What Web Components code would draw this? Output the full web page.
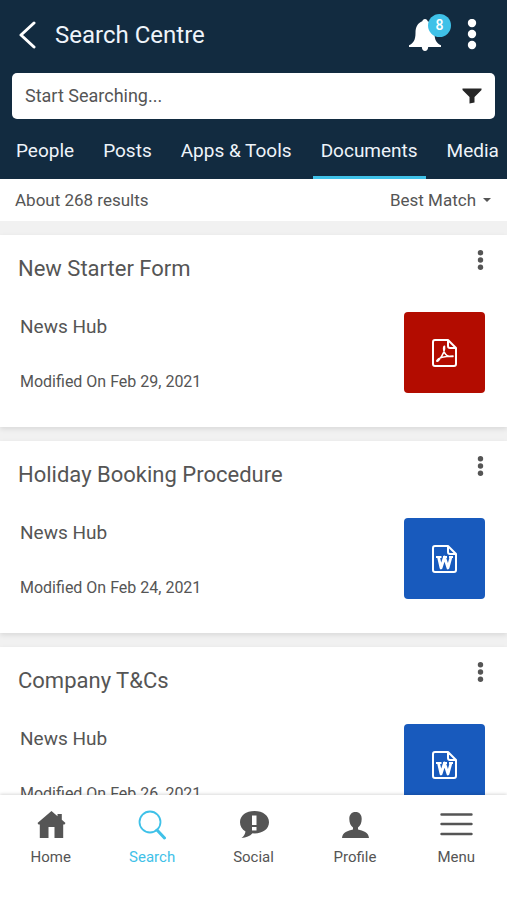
<!DOCTYPE html>
<html lang="en">
<head>
<meta charset="utf-8">
<meta name="viewport" content="width=device-width, initial-scale=1">
<title>Search Centre</title>
<style>
  :root {
    --navy: #122b40;
    --accent: #3fc1e8;
    --text: #555;
    --page: #f1f1f1;
  }
  body {
    margin: 0;
    background: var(--page);
    color: var(--text);
    font-family: Roboto, "Liberation Sans", sans-serif;
  }
</style>
</head>
<body>
<search-app>
  <app-header slot="header" heading="Search Centre" notifications="8">
    <search-box placeholder="Start Searching..."></search-box>
    <tab-bar slot="tabs">
      <tab-item>People</tab-item>
      <tab-item>Posts</tab-item>
      <tab-item>Apps &amp; Tools</tab-item>
      <tab-item selected>Documents</tab-item>
      <tab-item>Media</tab-item>
    </tab-bar>
  </app-header>

  <results-bar>About 268 results</results-bar>
  <document-card type="pdf" source="News Hub" modified="Feb 29, 2021">New Starter Form</document-card>
  <document-card type="word" source="News Hub" modified="Feb 24, 2021">Holiday Booking Procedure</document-card>
  <document-card type="word" source="News Hub" modified="Feb 26, 2021">Company T&amp;Cs</document-card>

  <bottom-nav slot="footer">
    <nav-item icon="home">Home</nav-item>
    <nav-item icon="search" current>Search</nav-item>
    <nav-item icon="social">Social</nav-item>
    <nav-item icon="profile">Profile</nav-item>
    <nav-item icon="menu">Menu</nav-item>
  </bottom-nav>
</search-app>

<script>
// name: [width, height, shapes]
const ICONS = {
  back: [18, 28, `<path d="M16 2 3 14l13 12" fill="none" stroke="currentColor" stroke-width="3" stroke-linecap="round" stroke-linejoin="round"/>`],
  bell: [34, 34, `<path d="M17 1c1.500 0 2.500 1 2.700 2.300C24.200 5 26.500 9 26.500 15c0 7 2 10.200 6.500 12.200V29H20.200c-.2 2.600-1.400 4-3.200 4S14 31.600 13.800 29H1v-1.800C5.500 25.200 7.500 22 7.500 15c0-6 2.300-10 6.800-11.700C14.500 2 15.500 1 17 1z"/>`],
  more: [10, 32, `<circle cx="5" cy="4" r="4.200"/><circle cx="5" cy="15" r="4.200"/><circle cx="5" cy="26" r="4.200"/>`],
  dots: [10, 20, `<circle cx="5.500" cy="2.700" r="2.700"/><circle cx="5.500" cy="10" r="2.700"/><circle cx="5.500" cy="17.300" r="2.700"/>`],
  filter: [20, 16, `<path d="M.5.500h19v1.500L12.500 9v5.500l-5 1V9L.5 2z"/>`],
  home: [30, 30, `<path d="M15.500 1 1.500 13l1 1.500h1.300V28h8.700V17h6v11h8.700V14.500h1.300l1-1.500-3.700-3.200V4h-4.300v2.200z"/>`],
  search: [30, 30, `<circle cx="13" cy="12" r="10.500" fill="none" stroke="currentColor" stroke-width="1.800"/><path d="m20 20 7.500 8" stroke="currentColor" stroke-width="3" stroke-linecap="round"/>`],
  social: [30, 30, `<path fill-rule="evenodd" d="M15.500 1C7 1 1 5.600 1 12.200c0 4 2 7.200 5.500 9.200-.5 2.800-1.800 4.800-4 6.600 4.700-.2 8.500-1.800 11-4.700l2 .1c8.500 0 14.500-4.700 14.500-11.200S24 1 15.500 1zM13 5.500h4.500V15H13zm0 11.500h4.500v3.500H13z"/>`],
  profile: [30, 30, `<path d="M15.500 2c4 0 6.200 2.700 6.200 7 0 4-1.500 7-3.700 8.500v2c5 1.500 10.500 2.500 11 8.500H2c.5-6 6-7 11-8.500v-2C10.800 16 9.300 13 9.300 9c0-4.300 2.200-7 6.200-7z"/>`],
  menu: [34, 30, `<path d="M2.500 4.500h30M2.500 14h30M2.500 24h30" stroke="currentColor" stroke-width="2.400" stroke-linecap="round"/>`],
  pdf: [27, 28, `<g fill="none" stroke="currentColor" stroke-width="2" stroke-linejoin="round" stroke-linecap="round"><path d="M17 1H4a2 2 0 0 0-2 2v22a2 2 0 0 0 2 2h19a2 2 0 0 0 2-2V9zM17 1v6a2 2 0 0 0 2 2h6"/><path d="M13.300 7.200c-1.200.6-.8 4 .2 6.300 1.300 3 4.500 4.500 8.500 4M13.500 7.200c.8 4-1.500 9-6 14.300-.8.900-2 1.300-1.600.1C7 19 14 17.200 22 17" stroke-width="1.500"/></g>`],
  word: [27, 28, `<g fill="none" stroke="currentColor" stroke-width="2" stroke-linejoin="round"><path d="M17 1H4a2 2 0 0 0-2 2v22a2 2 0 0 0 2 2h19a2 2 0 0 0 2-2V9zM17 1v6a2 2 0 0 0 2 2h6"/><path d="m7.500 12 2.500 11 3.500-11 3.500 11 3-11" stroke-width="2.800"/><path d="M5 12h5.500m1.500 0h4m2 0h4" stroke-width="1.800"/></g>`],
};

function icon(name) {
  const [width, height, shapes] = ICONS[name];
  return `<svg width="${width}" height="${height}" viewBox="0 0 ${width} ${height}" fill="currentColor" aria-hidden="true">${shapes}</svg>`;
}

const RESET = `
  * { box-sizing: border-box; }
  svg { display: block; flex: none; }
  button, input, select {
    margin: 0;
    padding: 0;
    border: 0;
    background: none;
    color: inherit;
    font: inherit;
  }
  button { cursor: pointer; }
`;

/**
 * Base class: attaches an open shadow root and fills it once
 */
class BaseElement extends HTMLElement {
  constructor() {
    super();
    this.attachShadow({ mode: "open" });
  }

  connectedCallback() {
    this.shadowRoot.innerHTML = `<style>${RESET}${this.styles()}</style>${this.markup()}`;
  }
}

/**
 * Page frame: fixed header and footer with a scrolling list between them
 */
class SearchApp extends BaseElement {
  styles() {
    return `
      :host { display: flex; flex-direction: column; height: 100vh; }
      main { flex: 1; min-height: 0; overflow: hidden auto; scrollbar-width: none; }
      .list { display: flex; flex-direction: column; gap: 14px; }
    `;
  }

  markup() {
    return `
      <slot name="header"></slot>
      <main><div class="list"><slot></slot></div></main>
      <slot name="footer"></slot>
    `;
  }
}

class AppHeader extends BaseElement {
  styles() {
    return `
      :host { display: block; background: var(--navy); color: #eef4fa; }
      .top { display: flex; align-items: center; height: 73px; padding: 0 30px 3px 18px; }
      h1 { flex: 1; margin: 0 0 0 19px; font-size: 24px; font-weight: 400; line-height: 32px; }
      .top button { color: #fff; }
      .bell { position: relative; margin-right: 25px; }
      .badge {
        position: absolute;
        top: -4px;
        right: -9px;
        width: 23px;
        border-radius: 50%;
        background: var(--accent);
        font-size: 14px;
        font-weight: 500;
        line-height: 23px;
        text-align: center;
      }
      .search { padding: 0 12px; }
    `;
  }

  markup() {
    return `
      <header>
        <div class="top">
          <button aria-label="Back">${icon("back")}</button>
          <h1>${this.getAttribute("heading")}</h1>
          <button class="bell" aria-label="Notifications">
            ${icon("bell")}<span class="badge">${this.getAttribute("notifications")}</span>
          </button>
          <button aria-label="More options">${icon("more")}</button>
        </div>
        <div class="search"><slot></slot></div>
        <slot name="tabs"></slot>
      </header>
    `;
  }
}

class SearchBox extends BaseElement {
  styles() {
    return `
      :host { display: block; }
      form {
        display: flex;
        align-items: center;
        height: 46px;
        padding: 0 13px;
        border-radius: 5px;
        background: #fff;
        color: var(--text);
      }
      input { flex: 1; min-width: 0; outline: none; font-size: 18px; line-height: 24px; }
      input::placeholder { color: var(--text); opacity: 1; }
      button { color: #262626; }
    `;
  }

  markup() {
    return `
      <form role="search">
        <input type="search" aria-label="Search" placeholder="${this.getAttribute("placeholder")}">
        <button type="button" aria-label="Filter">${icon("filter")}</button>
      </form>
    `;
  }
}

class TabBar extends BaseElement {
  styles() {
    return `
      :host { display: block; }
      nav { display: flex; gap: 13px; padding: 0 8px; overflow: auto hidden; scrollbar-width: none; }
    `;
  }

  markup() {
    return `<nav aria-label="Result types"><slot></slot></nav>`;
  }
}

class TabItem extends BaseElement {
  styles() {
    return `
      :host { flex: none; }
      button {
        display: block;
        height: 60px;
        padding: 7px 8px 0;
        border-bottom: 3px solid transparent;
        font-size: 19px;
        line-height: 24px;
        white-space: nowrap;
      }
      :host([selected]) button { border-color: var(--accent); }
    `;
  }

  markup() {
    return `<button><slot></slot></button>`;
  }
}

class ResultsBar extends BaseElement {
  styles() {
    return `
      :host { display: block; background: #fff; }
      .bar {
        display: flex;
        justify-content: space-between;
        align-items: center;
        height: 42px;
        padding: 0 16px 1px 15px;
        font-size: 17px;
        line-height: 24px;
      }
      label { display: flex; align-items: center; gap: 7px; }
      select { appearance: none; field-sizing: content; outline: none; }
      .caret { border: 4px solid transparent; border-top-color: currentColor; border-bottom: 0; }
    `;
  }

  markup() {
    return `
      <div class="bar">
        <span><slot></slot></span>
        <label>
          <select aria-label="Sort by">
            <option>Best Match</option>
          </select>
          <span class="caret"></span>
        </label>
      </div>
    `;
  }
}

class DocumentCard extends BaseElement {
  styles() {
    return `
      :host { display: block; background: #fff; box-shadow: 0 2px 5px rgba(0, 0, 0, 0.1); }
      article {
        display: grid;
        gap: 24px;
        padding: 15px 22px 34px 18px;
      }
      .row { display: flex; justify-content: space-between; align-items: flex-start; }
      h2 { margin: 0; font-size: 22px; font-weight: 400; line-height: 38px; }
      .meta {
        display: flex;
        flex-direction: column;
        justify-content: space-between;
        align-self: stretch;
        padding-left: 2px;
      }
      p { margin: 0; font-size: 19px; line-height: 30px; }
      .modified { font-size: 16px; line-height: 22px; }
      .tile {
        display: grid;
        place-items: center;
        width: 81px;
        height: 81px;
        border-radius: 4px;
        background: #b30c00;
        color: #fff;
      }
      :host([type="word"]) .tile { background: #185abd; }
    `;
  }

  markup() {
    return `
      <article>
        <div class="row">
          <h2><slot></slot></h2>
          <button aria-label="Document options">${icon("dots")}</button>
        </div>
        <div class="row">
          <div class="meta">
            <p>${this.getAttribute("source")}</p>
            <p class="modified">Modified On ${this.getAttribute("modified")}</p>
          </div>
          <div class="tile">${icon(this.getAttribute("type"))}</div>
        </div>
      </article>
    `;
  }
}

class BottomNav extends BaseElement {
  styles() {
    return `
      :host {
        display: block;
        position: relative;
        background: #fff;
        box-shadow: 0 -1px 3px rgba(0, 0, 0, 0.15);
      }
      nav { display: flex; padding: 15px 0 33px; }
    `;
  }

  markup() {
    return `<nav aria-label="Main"><slot></slot></nav>`;
  }
}

class NavItem extends BaseElement {
  styles() {
    return `
      :host { flex: 1 1 0; }
      :host([current]) { color: var(--accent); }
      a {
        display: flex;
        flex-direction: column;
        align-items: center;
        gap: 7px;
        color: inherit;
        font-size: 15px;
        line-height: 20px;
        text-decoration: none;
      }
    `;
  }

  markup() {
    return `<a href="#${this.getAttribute("icon")}">${icon(this.getAttribute("icon"))}<span><slot></slot></span></a>`;
  }
}

customElements.define("search-app", SearchApp);
customElements.define("app-header", AppHeader);
customElements.define("search-box", SearchBox);
customElements.define("tab-bar", TabBar);
customElements.define("tab-item", TabItem);
customElements.define("results-bar", ResultsBar);
customElements.define("document-card", DocumentCard);
customElements.define("bottom-nav", BottomNav);
customElements.define("nav-item", NavItem);
</script>
</body>
</html>
